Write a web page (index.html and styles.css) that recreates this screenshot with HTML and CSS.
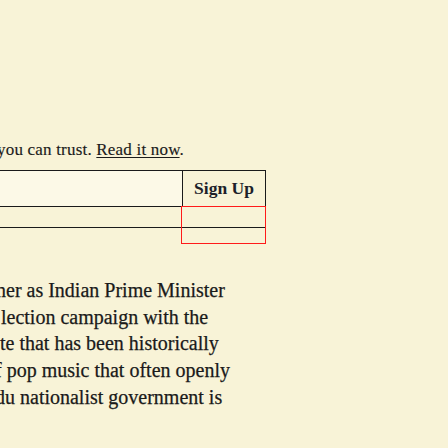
FILE: index.html
```html
<!DOCTYPE html>
<html lang="en">
<head>
<meta charset="utf-8">
<title>Newsletter</title>
<link rel="stylesheet" href="styles.css">
</head>
<body>
<main class="page">
  <p class="intro">you can trust. <a class="intro-link" href="#">Read it now</a>.</p>
  <form class="signup">
    <div class="signup-row">
      <div class="signup-input" aria-label="Email"></div>
      <button class="signup-btn" type="button">Sign Up</button>
    </div>
    <div class="signup-extra">
      <div class="signup-outline"></div>
    </div>
  </form>
  <div class="article">
    <div class="line l1">ner as Indian Prime Minister</div>
    <div class="line l2">lection campaign with the</div>
    <div class="line l3">te that has been historically</div>
    <div class="line l4">f pop music that often openly</div>
    <div class="line l5">du nationalist government is</div>
  </div>
</main>
</body>
</html>
```

FILE: styles.css
```css
html, body {
  margin: 0;
  padding: 0;
  background: #f8f3d7;
  overflow: hidden;
}
body {
  width: 448px;
  height: 448px;
  font-family: "Liberation Serif", "Times New Roman", serif;
  color: #1b1b1b;
}
.page {
  display: flex;
  flex-direction: column;
}
.intro {
  margin: 138px 0 0 -3px;
  font-size: 17px;
  line-height: 24px;
  letter-spacing: 0.2px;
  -webkit-text-stroke: 0.15px #1b1b1b;
  white-space: nowrap;
}
.intro-link {
  color: inherit;
  text-decoration: underline;
  text-underline-offset: 2px;
}
.signup {
  margin: 8px 0 0 0;
  width: 266px;
  display: flex;
  flex-direction: column;
}
.signup-row {
  display: flex;
  height: 37px;
}
.signup-input {
  flex: 1;
  background: #fcf9e7;
  border-top: 1px solid #1a1a1a;
  border-bottom: 1px solid #1a1a1a;
}
.signup-btn {
  width: 84px;
  margin: 0;
  padding: 0;
  background: transparent;
  border: 1px solid #1a1a1a;
  font-family: "Liberation Serif", "Times New Roman", serif;
  font-weight: bold;
  font-size: 17.5px;
  color: #1d1f2a;
}
.signup-extra {
  position: relative;
  height: 20px;
  border-bottom: 1px solid #1a1a1a;
}
.signup-outline {
  position: absolute;
  top: -1px;
  right: 0;
  width: 83px;
  height: 36px;
  border: 1px solid #ff1a1a;
}
.article {
  margin-top: 49px;
  font-size: 20px;
  line-height: 26.7px;
  color: #1a1a1a;
  -webkit-text-stroke: 0.25px #1a1a1a;
  white-space: nowrap;
}
.l1 { text-indent: -4px; }
.l2 { text-indent: 1px; }
.l3 { text-indent: 0; }
.l4 { text-indent: -5px; }
.l5 { text-indent: -5px; }
```
